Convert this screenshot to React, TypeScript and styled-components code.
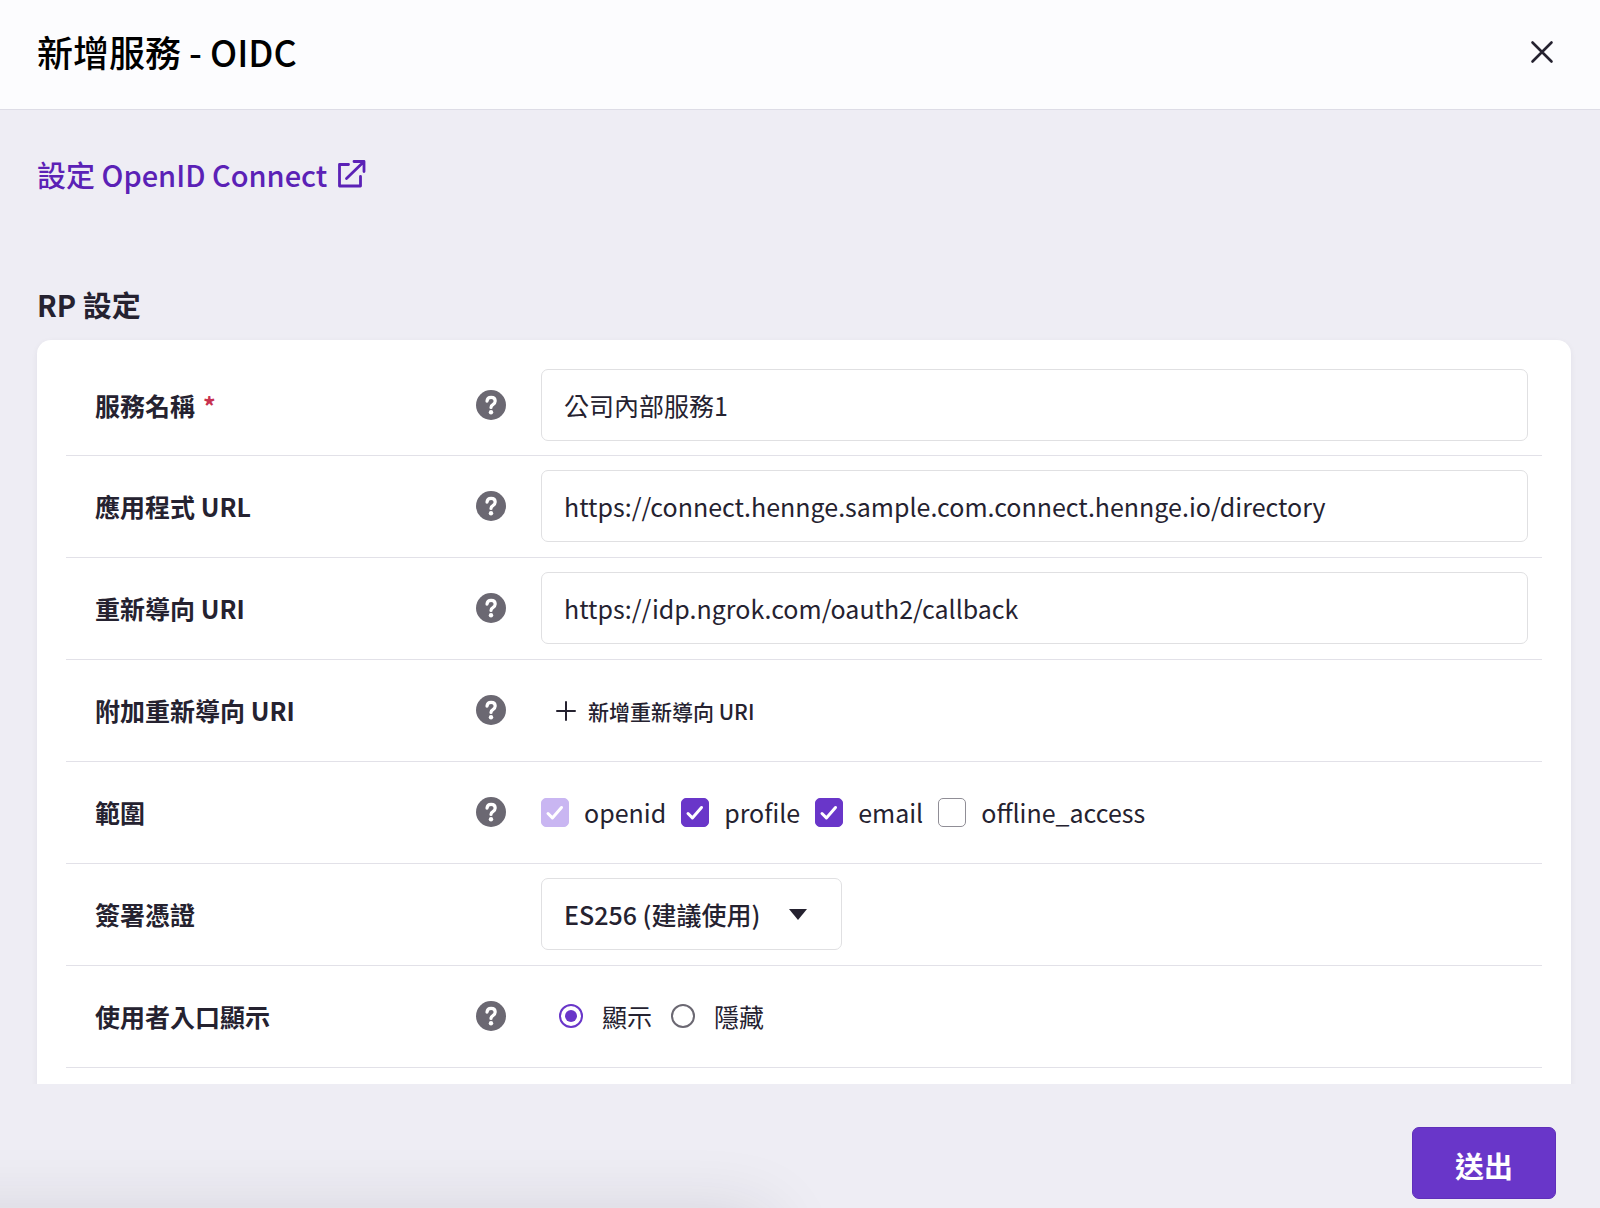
import React, { useState } from "react";
import styled, { createGlobalStyle } from "styled-components";

const color = {
  ink: "#252230",
  page: "#eeedf4",
  header: "#fcfcfe",
  line: "#e2e1e8",
  field: "#e0e0e2",
  accent: "#6936c9",
  accentDark: "#5b21b6",
  accentSoft: "#c9b6f2",
  muted: "#6b6872",
  danger: "#c8324f",
};

const GlobalStyle = createGlobalStyle`
  * { box-sizing: border-box; }
  body {
    margin: 0;
    background: ${color.page};
    color: ${color.ink};
    font-family: "Noto Sans CJK TC", "Noto Sans", sans-serif;
    font-size: 25px;
    line-height: 36px;
  }
  button, input, select { font: inherit; color: inherit; }
`;

const Dialog = styled.form`
  display: flex;
  flex-direction: column;
  height: 100vh;
`;

const Header = styled.header`
  display: flex;
  align-items: center;
  justify-content: space-between;
  flex: none;
  padding: 25px 44px 31px 37px;
  background: ${color.header};
  border-bottom: 1px solid #dddce6;
`;

const Title = styled.h1`
  margin: 0;
  font-size: 36px;
  line-height: 53px;
  font-weight: 500;
  color: #000;
`;

const CloseButton = styled.button`
  display: flex;
  padding: 0;
  border: 0;
  background: none;
  cursor: pointer;
`;

const Body = styled.main`
  flex: 1;
  min-height: 0;
  overflow-y: auto;
  scrollbar-width: none;
  padding: 42px 29px 0 37px;
`;

const DocLink = styled.a`
  display: inline-flex;
  align-items: center;
  gap: 8px;
  font-size: 29px;
  line-height: 44px;
  font-weight: 500;
  color: ${color.accentDark};
  text-decoration: none;
`;

const SectionTitle = styled.h2`
  margin: 86px 0 14px;
  font-size: 29px;
  line-height: 44px;
  font-weight: 700;
`;

const Card = styled.section`
  padding: 15px 29px 72px;
  border-radius: 14px;
  background: #fff;
  box-shadow: 0 2px 6px rgba(37, 34, 48, 0.06);
`;

const Row = styled.div`
  display: grid;
  grid-template-columns: 475px 1fr;
  align-items: center;
  min-height: 102px;
  padding: 14px 14px 15px 0;
  border-bottom: 1px solid ${color.line};

  &:first-child {
    min-height: 0;
    padding-bottom: 14px;
  }
`;

const LabelCell = styled.div`
  display: flex;
  align-items: center;
  justify-content: space-between;
  padding: 0 35px 0 29px;
  font-weight: 700;
`;

const Required = styled.span`
  margin-left: 8px;
  color: ${color.danger};
`;

const HelpButton = styled.button`
  display: flex;
  padding: 0;
  border: 0;
  background: none;
  cursor: help;
`;

const TextField = styled.input`
  width: 100%;
  height: 72px;
  padding: 0 22px;
  border: 1px solid ${color.field};
  border-radius: 7px;
  background: #fff;
`;

const AddButton = styled.button`
  display: inline-flex;
  align-items: center;
  gap: 12px;
  padding: 0 15px;
  border: 0;
  background: none;
  font-size: 21px;
  font-weight: 500;
  cursor: pointer;
`;

const Options = styled.div<{ $inset?: number }>`
  display: flex;
  align-items: center;
  gap: ${(p) => (p.$inset ? 19 : 15)}px;
  padding-left: ${(p) => p.$inset ?? 0}px;
`;

const Option = styled.label<{ $gap: number }>`
  display: flex;
  align-items: center;
  gap: ${(p) => p.$gap}px;
`;

const BoxWrap = styled.span`
  display: grid;

  & > * { grid-area: 1 / 1; }
  & > svg { pointer-events: none; }
`;

const CheckInput = styled.input`
  appearance: none;
  width: 28px;
  height: 29px;
  margin: 0;
  border: 1px solid #908e96;
  border-radius: 5px;
  background: #fff;

  &:checked { border-color: ${color.accent}; background: ${color.accent}; }
  &:disabled { border-color: ${color.accentSoft}; background: ${color.accentSoft}; }
`;

const RadioInput = styled.input`
  appearance: none;
  display: grid;
  place-items: center;
  width: 24px;
  height: 24px;
  margin: 0;
  border: 2px solid ${color.muted};
  border-radius: 50%;

  &:checked { border-color: ${color.accent}; }
  &:checked::before {
    content: "";
    width: 12px;
    height: 12px;
    border-radius: 50%;
    background: ${color.accent};
  }
`;

const SelectWrap = styled.div`
  display: inline-grid;
  align-items: center;
  width: 301px;

  & > * { grid-area: 1 / 1; }
  & > svg { justify-self: end; margin-right: 35px; pointer-events: none; }
`;

const Select = styled.select`
  appearance: none;
  width: 100%;
  height: 72px;
  padding: 0 60px 0 22px;
  border: 1px solid ${color.field};
  border-radius: 7px;
  background: #fff;
  font-weight: 500;
`;

const Footer = styled.footer`
  position: relative;
  display: flex;
  justify-content: flex-end;
  flex: none;
  padding: 43px 44px 9px;
  overflow: hidden;

  /* soft shadow rising from the lower left edge */
  &::before {
    content: "";
    position: absolute;
    top: 100%;
    left: -10%;
    width: 58%;
    height: 80px;
    box-shadow: 0 8px 72px rgba(37, 34, 48, 0.14);
    pointer-events: none;
  }
`;

const SubmitButton = styled.button`
  width: 144px;
  height: 72px;
  padding: 3px 0 0;
  border: 1px solid #5f2fba;
  border-radius: 7px;
  background: ${color.accent};
  color: #fff;
  font-size: 29px;
  font-weight: 700;
  cursor: pointer;
`;

function Help({ about }: { about: string }) {
  return (
    <HelpButton type="button" aria-label={about}>
      <svg width="30" height="30" viewBox="0 0 30 30" fill="none">
        <circle cx="15" cy="15" r="15" fill={color.muted} />
        <path d="M11 11.2C11.2 8.8 12.8 7.4 15.1 7.4c2.4 0 4.1 1.4 4.1 3.6 0 1.8-1 2.7-2.3 3.6-1.3.8-1.9 1.5-1.9 2.8" stroke="#fff" strokeWidth="3.2" strokeLinecap="round" />
        <circle cx="15" cy="22.3" r="2.2" fill="#fff" />
      </svg>
    </HelpButton>
  );
}

type FieldRowProps = {
  label: string;
  htmlFor?: string;
  required?: boolean;
  help?: boolean;
  children: React.ReactNode;
};

function FieldRow({ label, htmlFor, required, help = true, children }: FieldRowProps) {
  return (
    <Row>
      <LabelCell>
        <label htmlFor={htmlFor}>
          {label}
          {required && <Required>*</Required>}
        </label>
        {help && <Help about={label} />}
      </LabelCell>
      <div>{children}</div>
    </Row>
  );
}

const scopes = [
  { name: "openid", checked: true, locked: true },
  { name: "profile", checked: true },
  { name: "email", checked: true },
  { name: "offline_access", checked: false },
];

function Scope({ name, checked, locked }: { name: string; checked: boolean; locked?: boolean }) {
  const [on, setOn] = useState(checked);
  return (
    <Option $gap={15}>
      <BoxWrap>
        <CheckInput type="checkbox" checked={on} disabled={locked} onChange={() => setOn(!on)} />
        {on && (
          <svg width="28" height="29" viewBox="0 0 28 29" fill="none" stroke="#fff" strokeWidth="3" strokeLinecap="round" strokeLinejoin="round">
            <path d="M7 15.5l4.4 4.4L20.5 9.5" />
          </svg>
        )}
      </BoxWrap>
      {name}
    </Option>
  );
}

export default function App() {
  return (
    <>
      <GlobalStyle />
      <Dialog onSubmit={(e) => e.preventDefault()}>
        <Header>
          <Title>新增服務 - OIDC</Title>
          <CloseButton type="button" aria-label="關閉">
            <svg width="28" height="28" viewBox="0 0 28 28" stroke={color.ink} strokeWidth="2.6" strokeLinecap="round">
              <path d="M4.5 4.5l19 19M23.5 4.5l-19 19" />
            </svg>
          </CloseButton>
        </Header>

        <Body>
          <DocLink href="#openid-connect">
            設定 OpenID Connect
            <svg width="32" height="32" viewBox="0 0 32 32" fill="none" stroke="currentColor" strokeWidth="2.8" strokeLinecap="round" strokeLinejoin="round">
              <path d="M13.5 6.5H4.5v21.5H25.5V18.5M19 3.5h10v10M28.5 4L11.5 20.5" />
            </svg>
          </DocLink>

          <SectionTitle>RP 設定</SectionTitle>
          <Card>
            <FieldRow label="服務名稱" htmlFor="name" required>
              <TextField id="name" type="text" defaultValue="公司內部服務1" />
            </FieldRow>
            <FieldRow label="應用程式 URL" htmlFor="app-url">
              <TextField id="app-url" type="text" defaultValue="https://connect.hennge.sample.com.connect.hennge.io/directory" />
            </FieldRow>
            <FieldRow label="重新導向 URI" htmlFor="redirect-uri">
              <TextField id="redirect-uri" type="text" defaultValue="https://idp.ngrok.com/oauth2/callback" />
            </FieldRow>
            <FieldRow label="附加重新導向 URI" htmlFor="add-uri">
              <AddButton id="add-uri" type="button">
                <svg width="20" height="20" viewBox="0 0 20 20" stroke={color.ink} strokeWidth="2" strokeLinecap="round">
                  <path d="M10 1v18M1 10h18" />
                </svg>
                新增重新導向 URI
              </AddButton>
            </FieldRow>
            <FieldRow label="範圍">
              <Options role="group" aria-label="範圍">
                {scopes.map((s) => (
                  <Scope key={s.name} {...s} />
                ))}
              </Options>
            </FieldRow>
            <FieldRow label="簽署憑證" htmlFor="certificate" help={false}>
              <SelectWrap>
                <Select id="certificate">
                  <option>ES256 (建議使用)</option>
                </Select>
                <svg width="18" height="11" viewBox="0 0 18 11" fill={color.ink}>
                  <path d="M0 0h18L9 11z" />
                </svg>
              </SelectWrap>
            </FieldRow>
            <FieldRow label="使用者入口顯示">
              <Options role="radiogroup" aria-label="使用者入口顯示" $inset={18}>
                <Option $gap={19}>
                  <RadioInput type="radio" name="portal" defaultChecked />
                  顯示
                </Option>
                <Option $gap={19}>
                  <RadioInput type="radio" name="portal" />
                  隱藏
                </Option>
              </Options>
            </FieldRow>
          </Card>
        </Body>

        <Footer>
          <SubmitButton type="submit">送出</SubmitButton>
        </Footer>
      </Dialog>
    </>
  );
}
